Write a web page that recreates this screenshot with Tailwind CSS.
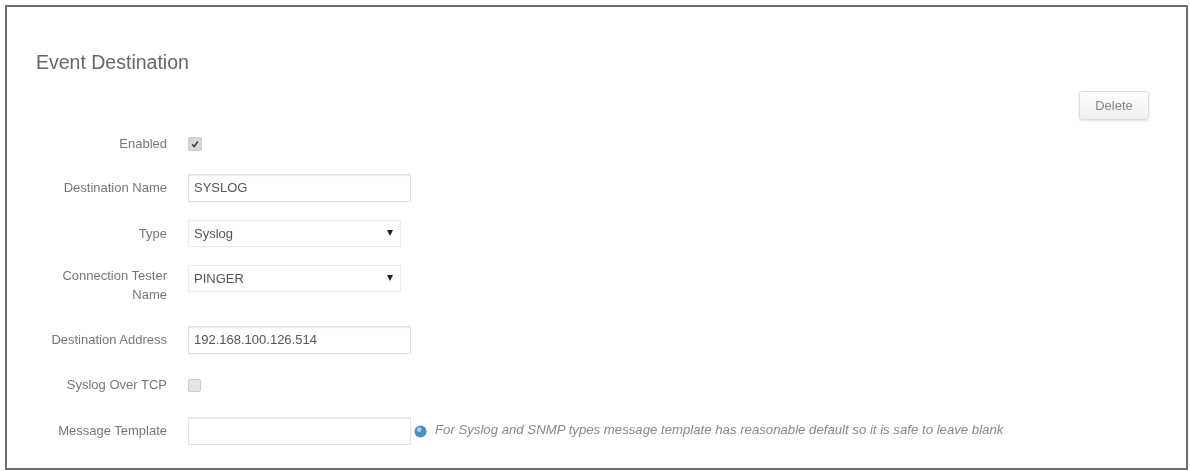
<!DOCTYPE html>
<html>
<head>
<meta charset="utf-8">
<script src="https://cdn.jsdelivr.net/npm/@tailwindcss/browser@4"></script>
</head>
<body class="bg-white">
<div class="w-[1190px] h-[471px] pt-[5px] pr-[2px] pb-[1px] pl-[5px] bg-white overflow-hidden font-['Liberation_Sans',Arial,sans-serif]">
  <div class="h-full border-2 border-[#6e6e6e] blur-[0.5px] pl-[28px] pr-[37px]">
    <div class="flex justify-between items-start h-[126px]">
      <h2 class="mt-[45px] ml-[1px] text-[19.5px] leading-[20px] font-normal text-[#666]">Event Destination</h2>
      <button class="mt-[84px] w-[70px] h-[29px] border border-[#ddd] rounded-[3px] bg-gradient-to-b from-white to-[#eee] text-[13px] text-[#888] shadow-sm">Delete</button>
    </div>
    <div class="flex flex-col text-[13px] text-[#777]">
      <div class="flex items-center h-[22px] mt-0">
        <label class="w-[132px] text-right whitespace-nowrap">Enabled</label>
        <span class="ml-[21px] w-[14px] h-[14px] rounded-[2px] bg-[#d8d8d8] border border-[#ccc] flex items-center justify-center">
          <svg viewBox="0 0 12 12" class="w-[10px] h-[10px]"><path d="M2.5 6.5 L5 9 L9.5 3" fill="none" stroke="#444" stroke-width="2"/></svg>
        </span>
      </div>
      <div class="flex items-center h-[28px] mt-[19px]">
        <label class="w-[132px] text-right whitespace-nowrap">Destination Name</label>
        <div class="ml-[21px] w-[223px] h-[28px] border border-[#e0e0e0] shadow-[inset_0_1px_1px_#eee] px-[5px] flex items-center text-[13px] text-[#555]">SYSLOG</div>
      </div>
      <div class="flex items-center h-[27px] mt-[18px]">
        <label class="w-[132px] text-right whitespace-nowrap">Type</label>
        <div class="ml-[21px] w-[213px] h-[27px] border border-[#ececec] pl-[5px] pr-[7px] flex items-center justify-between text-[13px] text-[#555]"><span>Syslog</span><span class="w-0 h-0 -mt-[2px] border-x-[3px] border-x-transparent border-t-[6px] border-t-[#222]"></span></div>
      </div>
      <div class="flex items-start h-[45px] mt-[18px]">
        <label class="w-[132px] text-right leading-[19px] pt-[1px] whitespace-nowrap">Connection Tester<br>Name</label>
        <div class="ml-[21px] w-[213px] h-[27px] border border-[#ececec] pl-[5px] pr-[7px] flex items-center justify-between text-[13px] text-[#555]"><span>PINGER</span><span class="w-0 h-0 -mt-[2px] border-x-[3px] border-x-transparent border-t-[6px] border-t-[#222]"></span></div>
      </div>
      <div class="flex items-center h-[28px] mt-[16px]">
        <label class="w-[132px] text-right whitespace-nowrap">Destination Address</label>
        <div class="ml-[21px] w-[223px] h-[28px] border border-[#e0e0e0] shadow-[inset_0_1px_1px_#eee] px-[5px] flex items-center text-[13px] text-[#555]">192.168.100.126.514</div>
      </div>
      <div class="flex items-center h-[22px] mt-[20px]">
        <label class="w-[132px] text-right whitespace-nowrap">Syslog Over TCP</label>
        <span class="ml-[21px] w-[13px] h-[13px] rounded-[2px] bg-[#e6e6e6] border border-[#ccc]"></span>
      </div>
      <div class="flex items-center h-[28px] mt-[21px]">
        <label class="w-[132px] text-right whitespace-nowrap">Message Template</label>
        <div class="ml-[21px] w-[223px] h-[28px] border border-[#e2e2e2] shadow-[inset_0_1px_1px_#eee]"></div>
        <svg viewBox="0 0 14 14" class="w-[13px] h-[13px] ml-[3px]"><circle cx="7" cy="7" r="6.5" fill="#4a8fc0"/><circle cx="5.5" cy="5" r="2.5" fill="#a9d0ea"/></svg>
        <span class="ml-[8px] -mt-[2px] italic text-[#888] text-[13.2px] whitespace-nowrap">For Syslog and SNMP types message template has reasonable default so it is safe to leave blank</span>
      </div>
    </div>
  </div>
</div>
</body>
</html>
